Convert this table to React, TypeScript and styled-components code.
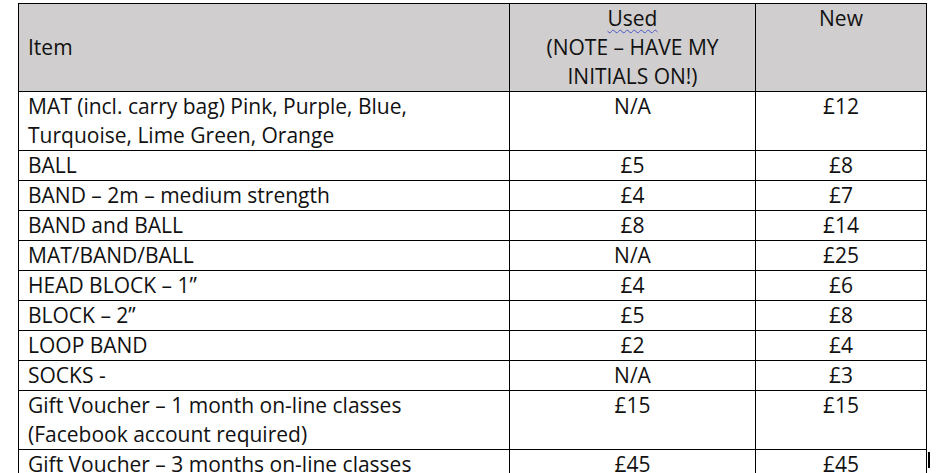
import React from 'react';
import styled, { createGlobalStyle } from 'styled-components';

const GlobalStyle = createGlobalStyle`
  html, body {
    margin: 0;
    padding: 0;
    background: #fff;
    overflow: hidden;
  }
  body {
    font-family: "Open Sans", Lato, "Liberation Sans", sans-serif;
    color: #111;
  }
`;

const Page = styled.div`
  padding: 3px 0 0 18px;
  height: 473px;
  box-sizing: border-box;
  overflow: hidden;
`;

const Table = styled.table`
  border-collapse: collapse;
  table-layout: fixed;
  width: 908px;
  font-size: 21px;
  line-height: 29px;
`;

interface CellProps {
  align?: 'left' | 'center';
}

const HeadCell = styled.th<CellProps>`
  background: #d0cece;
  border: 1px solid #000;
  font-weight: 400;
  padding: 0 9px;
  text-align: ${p => p.align || 'center'};
  vertical-align: ${p => (p.align === 'left' ? 'middle' : 'top')};
`;

const Cell = styled.td<CellProps>`
  border: 1px solid #000;
  padding: 0 9px;
  white-space: nowrap;
  text-align: ${p => p.align || 'center'};
  vertical-align: top;
`;

const LastCell = styled(Cell)`
  position: relative;
  &::after {
    content: '';
    position: absolute;
    right: -4px;
    top: 2px;
    width: 2px;
    height: 16px;
    background: #000;
  }
`;

const Squiggle = styled.span`
  text-decoration-line: underline;
  text-decoration-style: wavy;
  text-decoration-color: #4a55c8;
  text-decoration-thickness: 1px;
  text-underline-offset: 3px;
`;

const rows: [string[], string, string][] = [
  [['MAT (incl. carry bag) Pink, Purple, Blue,', 'Turquoise, Lime Green, Orange'], 'N/A', '£12'],
  [['BALL'], '£5', '£8'],
  [['BAND – 2m – medium strength'], '£4', '£7'],
  [['BAND and BALL'], '£8', '£14'],
  [['MAT/BAND/BALL'], 'N/A', '£25'],
  [['HEAD BLOCK – 1”'], '£4', '£6'],
  [['BLOCK – 2”'], '£5', '£8'],
  [['LOOP BAND'], '£2', '£4'],
  [['SOCKS -'], 'N/A', '£3'],
  [['Gift Voucher – 1 month on-line classes', '(Facebook account required)'], '£15', '£15'],
];

const App: React.FC = () => {
  return (
    <>
      <GlobalStyle />
      <Page>
        <Table>
          <colgroup>
            <col style={{ width: 491 }} />
            <col style={{ width: 246 }} />
            <col style={{ width: 171 }} />
          </colgroup>
          <thead>
            <tr>
              <HeadCell align="left">Item</HeadCell>
              <HeadCell>
                <Squiggle>Used</Squiggle>
                <br />
                (NOTE – HAVE MY
                <br />
                INITIALS ON!)
              </HeadCell>
              <HeadCell>New</HeadCell>
            </tr>
          </thead>
          <tbody>
            {rows.map(([item, used, fresh], i) => (
              <tr key={i}>
                <Cell align="left">
                  {item.map((line, j) => (
                    <React.Fragment key={j}>
                      {j > 0 && <br />}
                      {line}
                    </React.Fragment>
                  ))}
                </Cell>
                <Cell>{used}</Cell>
                <Cell>{fresh}</Cell>
              </tr>
            ))}
            <tr>
              <Cell align="left">
                Gift Voucher – 3 months on-line classes
                <br />
                (Facebook account required)
              </Cell>
              <Cell>£45</Cell>
              <LastCell>£45</LastCell>
            </tr>
          </tbody>
        </Table>
      </Page>
    </>
  );
};

export default App;
